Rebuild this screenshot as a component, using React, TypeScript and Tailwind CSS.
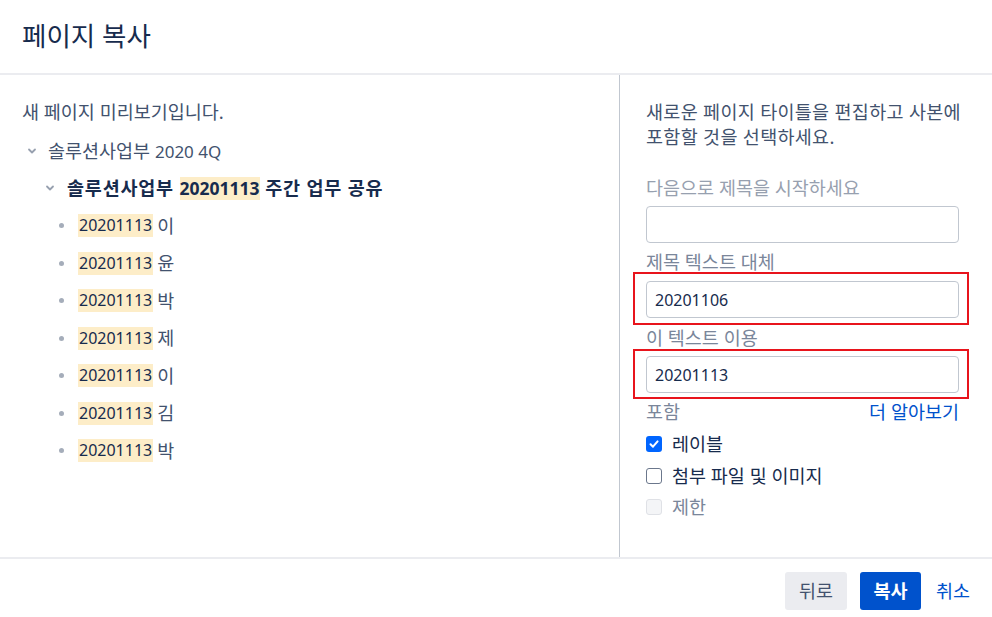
import React from "react";

const Chevron = ({ className = "" }: { className?: string }) => (
  <svg width="10" height="10" viewBox="0 0 10 10" className={className}>
    <path d="M2 3.5 L5 6.5 L8 3.5" fill="none" stroke="#97a0af" strokeWidth="1.8" strokeLinecap="round" strokeLinejoin="round" />
  </svg>
);

const items = ["이", "윤", "박", "제", "이", "김", "박"];

export default function App() {
  return (
    <div className="w-[992px] h-[617px] bg-white flex flex-col font-['Noto_Sans','Noto_Sans_CJK_KR',sans-serif] text-[#172b4d] overflow-hidden">
      {/* header */}
      <div className="h-[75px] shrink-0 border-b-2 border-[#ebecf0] flex items-center pl-[22px] pb-[2px]">
        <h1 className="text-[26.5px] leading-[30px] font-normal text-[#172b4d]">페이지 복사</h1>
      </div>

      {/* body */}
      <div className="flex-1 flex min-h-0">
        {/* left */}
        <div className="w-[620px] shrink-0 border-r border-[#c1c7d0] pl-[22px] pt-[24px] text-[18.5px]">
          <p className="leading-[25px] text-[#42526e]">새 페이지 미리보기입니다.</p>
          <div className="mt-[14px] flex items-center h-[25px] text-[#42526e]">
            <Chevron className="ml-[5px] mr-[11px]" />
            <span>
              솔루션사업부 <span className="text-[17px]">2020 4Q</span>
            </span>
          </div>
          <div className="mt-[12px] flex items-center h-[25px] font-bold text-[#172b4d]">
            <Chevron className="ml-[23px] mr-[12px]" />
            <span className="tracking-[0.8px]">
              솔루션사업부{" "}
              <span className="bg-[#fdedc8] text-[17.5px] tracking-normal inline-block leading-[23px]">20201113</span>{" "}
              주간 업무 공유
            </span>
          </div>
          <ul className="mt-[13px] flex flex-col gap-[12.5px]">
            {items.map((n, i) => (
              <li key={i} className="flex items-center h-[25px] text-[#172b4d]">
                <span className="ml-[37px] w-[5px] h-[5px] rounded-full bg-[#a5adba]" />
                <span className="ml-[14px] flex items-center">
                  <span className="bg-[#fdedc8] inline-block text-[16px] leading-[23px] px-[1px]">20201113</span>
                  <span className="ml-[4px] text-[#42526e]">{n}</span>
                </span>
              </li>
            ))}
          </ul>
        </div>

        {/* right */}
        <div className="flex-1 pl-[26px] pr-[33px] pt-[24px] text-[18.5px]">
          <p className="leading-[25px] text-[#42526e] -mr-[9px] tracking-[0.3px]">
            새로운 페이지 타이틀을 편집하고 사본에 포함할 것을 선택하세요.
          </p>
          <div className="mt-[26px] h-[25px] leading-[25px] text-[#97a0af]">다음으로 제목을 시작하세요</div>
          <div className="mt-[6px] h-[37px] rounded-[4px] border border-[#c1c7d0] bg-white" />
          <div className="mt-[6px] h-[25px] leading-[25px] text-[#7a869a]">제목 텍스트 대체</div>
          <div className="relative mt-[7px]">
            <div className="h-[37px] rounded-[4px] border border-[#c1c7d0] bg-white flex items-center pl-[8px] text-[16px] text-[#172b4d]">
              20201106
            </div>
            <div className="absolute -left-[13px] -right-[10px] -top-[9px] -bottom-[7px] border-2 border-[#e8141c] pointer-events-none" />
          </div>
          <div className="mt-[7px] h-[25px] leading-[25px] text-[#7a869a]">이 텍스트 이용</div>
          <div className="relative mt-[6px]">
            <div className="h-[37px] rounded-[4px] border border-[#c1c7d0] bg-white flex items-center pl-[8px] text-[16px] text-[#172b4d]">
              20201113
            </div>
            <div className="absolute -left-[13px] -right-[10px] -top-[7px] -bottom-[6px] border-2 border-[#e8141c] pointer-events-none" />
          </div>
          <div className="mt-[6px] h-[25px] leading-[25px] flex justify-between">
            <span className="text-[#7a869a]">포함</span>
            <span className="text-[#0052cc]">더 알아보기</span>
          </div>
          <div className="mt-[7px] flex items-center h-[25px]">
            <span className="w-[16px] h-[16px] rounded-[3px] bg-[#0065ff] flex items-center justify-center">
              <svg width="12" height="12" viewBox="0 0 12 12">
                <path d="M2.5 6.3 L5 8.7 L9.6 3.4" fill="none" stroke="white" strokeWidth="2" strokeLinecap="round" strokeLinejoin="round" />
              </svg>
            </span>
            <span className="ml-[10px] text-[#172b4d]">레이블</span>
          </div>
          <div className="mt-[7px] flex items-center h-[25px]">
            <span className="w-[16px] h-[16px] rounded-[3px] border-[1.5px] border-[#6b778c] bg-white" />
            <span className="ml-[10px] text-[#172b4d]">첨부 파일 및 이미지</span>
          </div>
          <div className="mt-[6px] flex items-center h-[25px]">
            <span className="w-[16px] h-[16px] rounded-[3px] border border-[#dfe1e6] bg-[#f4f5f7]" />
            <span className="ml-[10px] text-[#7a869a]">제한</span>
          </div>
        </div>
      </div>

      {/* footer */}
      <div className="h-[60px] shrink-0 border-t-2 border-[#ebecf0] flex items-start justify-end pt-[13px] pr-[22px] text-[18.5px]">
        <button className="w-[62px] h-[38px] rounded-[3px] bg-[#ebecf0] text-[#42526e]">뒤로</button>
        <button className="ml-[13px] w-[61px] h-[38px] rounded-[3px] bg-[#0052cc] text-white font-bold">복사</button>
        <button className="ml-[15px] h-[38px] text-[#0052cc]">취소</button>
      </div>
    </div>
  );
}
